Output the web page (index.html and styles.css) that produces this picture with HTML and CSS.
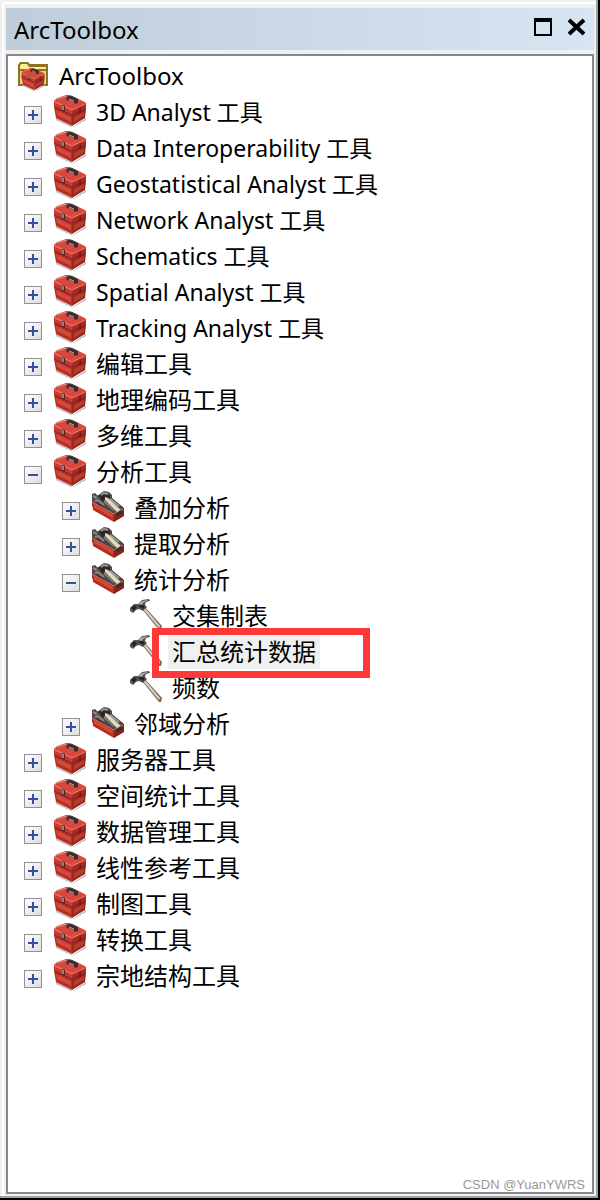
FILE: index.html
```
<!DOCTYPE html>
<html lang="zh-CN">
<head>
    <meta charset="UTF-8">
    <meta name="viewport" content="width=device-width, initial-scale=1.0">
    <title>ArcToolbox</title>
    <link rel="stylesheet" href="styles.css">
</head>
<body>
    <!-- Icons -->
    <svg class="sprite" aria-hidden="true">
        <symbol id="toolbox" viewBox="0 0 32 32">
            <path d="M2 23l17 9 13-9v2l-12 7h-3L2 25z" fill="#bbb"/>
            <path d="M0 6l3-3 9-3 4 0 15 7 1 2-12 6h-3z" fill="#d9483c"/>
            <path d="M0 6l18 9v5L0 12z" fill="#c8382e"/>
            <path d="M32 8v6l-14 6v-5z" fill="#ad2a22"/>
            <path d="M0 12l18 8v11L2 23z" fill="#b92c23"/>
            <path d="M32 14l-14 6v11l13-8z" fill="#982720"/>
            <path d="M2 15l15 7v5L3 20z" fill="#d14a3e"/>
            <path d="M20 22l10-5v4l-10 6z" fill="#b83b30"/>
            <path d="M0 12l18 8 14-6" fill="none" stroke="#77201a"/>
            <path d="M1 7l17 8 13-6" fill="none" stroke="#ea8578"/>
            <path d="M3 4l9-3" fill="none" stroke="#ed9689"/>
            <path d="M12 4l2-3 4 0 6 3v4l-3 1-2-3-4-2-1 2z" fill="#333"/>
            <path d="M15 4l5 2" stroke="#a59a94"/>
            <path d="M8 10l3 1v6l-3-1z" fill="#4c2926"/>
            <path d="M9 11v4" stroke="#ddd"/>
            <path d="M26 12v6" stroke="#5b1512" stroke-width="1"/>
        </symbol>
        <symbol id="toolset" viewBox="0 0 32 32">
            <path d="M0 9l3-3 7-4 22 15v5l-9 5L0 15z" fill="#39332f"/>
            <path d="M0 3l3-1 3 3 3-3 3-2 5 1 3 3 0 3 11 9 0 3-8 6L8 13 0 11z" fill="#4b4846"/>
            <path d="M7 5l4-3 4 0 3 3-1 3 6 7-3 3-10-8z" fill="#292827"/>
            <path d="M9 4l3-2 4 1M18 8l9 7" fill="none" stroke="#999" stroke-width="2"/>
            <path d="M1 5l4 2M3 10l3-1 6 5M12 10l10 9" fill="none" stroke="#8d8985" stroke-width="2"/>
            <path d="M13 6l3 1 14 13-1 3-3-1-13-13z" fill="#e3d8c3"/>
            <path d="M12 9l14 14" fill="none" stroke="#756656"/>
            <path d="M0 11l22 12v8L1 19z" fill="#b92c22"/>
            <path d="M2 13l19 11v3L2 16z" fill="#d5483a"/>
            <path d="M22 24l10-6v7l-10 6z" fill="#8b211b"/>
            <path d="M0 11l22 12 9-5" fill="none" stroke="#df7569"/>
            <path d="M23 23l6-4 2 3-6 3z" fill="#38302b"/>
        </symbol>
        <symbol id="hammer" viewBox="0 0 32 32">
            <path d="M12 10l3-2 17 19-1 4h-2z" fill="#776b60"/>
            <path d="M13 10l2-1 15 18-1 2z" fill="#ddd0bc"/>
            <path d="M0 9l4-4 4 0 4-4 7-1 1 2-4 1-1 3 2 2-4 4-4-2-3 1-3 3-3-2z" fill="#555"/>
            <path d="M1 9l3-3 3 2-3 4zM8 7l4-2 3 3-2 2z" fill="#252525"/>
            <path d="M8 5l4-3 6-1-5 3-1 2z" fill="#aaa"/>
        </symbol>
        <symbol id="root-folder" viewBox="0 0 32 32">
            <path d="M1 5l2-3h8l2 2h18v22H1z" fill="#8d7425"/>
            <path d="M3 6l1-2h6l2 3h17v2H3z" fill="#fff08d"/>
            <path d="M3 11h26v13H3z" fill="#e6d47e"/>
            <use href="#toolbox" x="4" y="8" width="24" height="23"/>
        </symbol>
    </svg>

    <div class="window">
        <header class="titlebar">
            <h1 class="title">ArcToolbox</h1>
            <button class="window-btn" aria-label="最大化"><svg width="18" height="18"><path d="M1 2h16v15H1z" fill="none" stroke="#000" stroke-width="2"/><path d="M0 2h18" stroke="#000" stroke-width="4"/></svg></button>
            <button class="window-btn" aria-label="关闭"><svg width="18" height="18"><path d="M1 2l15 14M16 2L1 16" stroke="#000" stroke-width="4"/></svg></button>
        </header>

        <main class="panel">
            <div class="row root"><svg class="icon"><use href="#root-folder"/></svg><span class="label">ArcToolbox</span></div>
            <ul class="tree">
                <li><div class="row"><button class="toggle" aria-label="展开"></button><svg class="icon"><use href="#toolbox"/></svg><span class="label latin">3D Analyst 工具</span></div></li>
                <li><div class="row"><button class="toggle" aria-label="展开"></button><svg class="icon"><use href="#toolbox"/></svg><span class="label latin">Data Interoperability 工具</span></div></li>
                <li><div class="row"><button class="toggle" aria-label="展开"></button><svg class="icon"><use href="#toolbox"/></svg><span class="label latin">Geostatistical Analyst 工具</span></div></li>
                <li><div class="row"><button class="toggle" aria-label="展开"></button><svg class="icon"><use href="#toolbox"/></svg><span class="label latin">Network Analyst 工具</span></div></li>
                <li><div class="row"><button class="toggle" aria-label="展开"></button><svg class="icon"><use href="#toolbox"/></svg><span class="label latin">Schematics 工具</span></div></li>
                <li><div class="row"><button class="toggle" aria-label="展开"></button><svg class="icon"><use href="#toolbox"/></svg><span class="label latin">Spatial Analyst 工具</span></div></li>
                <li><div class="row"><button class="toggle" aria-label="展开"></button><svg class="icon"><use href="#toolbox"/></svg><span class="label latin">Tracking Analyst 工具</span></div></li>
                <li><div class="row"><button class="toggle" aria-label="展开"></button><svg class="icon"><use href="#toolbox"/></svg><span class="label">编辑工具</span></div></li>
                <li><div class="row"><button class="toggle" aria-label="展开"></button><svg class="icon"><use href="#toolbox"/></svg><span class="label">地理编码工具</span></div></li>
                <li><div class="row"><button class="toggle" aria-label="展开"></button><svg class="icon"><use href="#toolbox"/></svg><span class="label">多维工具</span></div></li>
                <li>
                    <div class="row"><button class="toggle open" aria-label="折叠"></button><svg class="icon"><use href="#toolbox"/></svg><span class="label">分析工具</span></div>
                    <ul class="branch">
                        <li><div class="row"><button class="toggle" aria-label="展开"></button><svg class="icon"><use href="#toolset"/></svg><span class="label">叠加分析</span></div></li>
                        <li><div class="row"><button class="toggle" aria-label="展开"></button><svg class="icon"><use href="#toolset"/></svg><span class="label">提取分析</span></div></li>
                        <li>
                            <div class="row"><button class="toggle open" aria-label="折叠"></button><svg class="icon"><use href="#toolset"/></svg><span class="label">统计分析</span></div>
                            <ul class="branch tools">
                                <li><div class="row"><svg class="icon"><use href="#hammer"/></svg><span class="label">交集制表</span></div></li>
                                <li><div class="row marked"><svg class="icon"><use href="#hammer"/></svg><span class="label selected">汇总统计数据</span></div></li>
                                <li><div class="row"><svg class="icon"><use href="#hammer"/></svg><span class="label">频数</span></div></li>
                            </ul>
                        </li>
                        <li><div class="row"><button class="toggle" aria-label="展开"></button><svg class="icon"><use href="#toolset"/></svg><span class="label">邻域分析</span></div></li>
                    </ul>
                </li>
                <li><div class="row"><button class="toggle" aria-label="展开"></button><svg class="icon"><use href="#toolbox"/></svg><span class="label">服务器工具</span></div></li>
                <li><div class="row"><button class="toggle" aria-label="展开"></button><svg class="icon"><use href="#toolbox"/></svg><span class="label">空间统计工具</span></div></li>
                <li><div class="row"><button class="toggle" aria-label="展开"></button><svg class="icon"><use href="#toolbox"/></svg><span class="label">数据管理工具</span></div></li>
                <li><div class="row"><button class="toggle" aria-label="展开"></button><svg class="icon"><use href="#toolbox"/></svg><span class="label">线性参考工具</span></div></li>
                <li><div class="row"><button class="toggle" aria-label="展开"></button><svg class="icon"><use href="#toolbox"/></svg><span class="label">制图工具</span></div></li>
                <li><div class="row"><button class="toggle" aria-label="展开"></button><svg class="icon"><use href="#toolbox"/></svg><span class="label">转换工具</span></div></li>
                <li><div class="row"><button class="toggle" aria-label="展开"></button><svg class="icon"><use href="#toolbox"/></svg><span class="label">宗地结构工具</span></div></li>
            </ul>
            <footer class="credit">CSDN @YuanYWRS</footer>
        </main>
    </div>
</body>
</html>
```
FILE: styles.css
```
* {
    box-sizing: border-box;
}

body {
    margin: 0;
    background-color: #f0f0f0;
    color: #000;
    font-family: "Noto Sans", "Noto Sans CJK SC", sans-serif;
    font-size: 24px;
}

.sprite {
    position: absolute;
    width: 0;
    height: 0;
}

.window {
    display: flex;
    flex-direction: column;
    gap: 4px;
    min-height: 100vh;
    padding: 8px 4px 4px 6px;
    background-color: #f0f0f0;
    border-right: 2px solid #000;
    border-bottom: 2px solid #000;
    box-shadow: inset -2px -2px #a0a0a0, inset 2px 2px #f0f0f0, inset 4px 4px #fff;
}

.titlebar {
    display: flex;
    align-items: center;
    gap: 16px;
    height: 42px;
    padding: 0 8px;
    background: linear-gradient(to right, #bfcddb, #d7e4f2);
}

.title {
    flex: 1;
    margin: 0;
    font-size: 24px;
    font-weight: normal;
}

.window-btn {
    width: 18px;
    height: 18px;
    margin-bottom: 4px;
    padding: 0;
    border: none;
    background: none;
}

.window-btn svg {
    display: block;
}

.panel {
    display: flex;
    flex-direction: column;
    flex: 1;
    padding-top: 2px;
    border: 2px solid #828790;
    background-color: #fff;
}

.tree,
.branch {
    margin: 0;
    padding: 0;
    list-style: none;
}

.tree {
    padding-left: 16px;
}

.branch {
    padding-left: 38px;
}

.tools {
    padding-left: 68px;
}

.row {
    display: flex;
    align-items: center;
    height: 36px;
}

.root {
    padding-left: 9px;
}

.icon {
    flex: none;
    width: 32px;
    height: 32px;
    margin-bottom: 2px;
}

.root .icon {
    margin-bottom: 0;
}

.label {
    padding: 0 4px;
    margin-left: 6px;
    line-height: 34px;
    white-space: nowrap;
}

.latin {
    font-size: 23px;
}

.toggle {
    flex: none;
    width: 18px;
    height: 18px;
    margin: 6px 12px 0 0;
    padding: 0;
    border: 1px solid #919191;
    background: linear-gradient(#3050a0, #3050a0) center / 10px 2px no-repeat,
        linear-gradient(#3050a0, #3050a0) center / 2px 10px no-repeat,
        linear-gradient(135deg, #fff, #ddd);
}

.toggle.open {
    background: linear-gradient(#3050a0, #3050a0) center / 10px 2px no-repeat,
        linear-gradient(135deg, #fff, #ddd);
}

.selected {
    background-color: #f0f0f0;
}

/* red frame round the tool to run */
.marked {
    position: relative;
}

.marked::after {
    content: "";
    position: absolute;
    top: -6px;
    left: 22px;
    box-sizing: border-box;
    width: 218px;
    height: 50px;
    border: 7px solid #fc3838;
}

.credit {
    margin-top: auto;
    padding-right: 7px;
    color: #999;
    font-family: "Liberation Sans", sans-serif;
    font-size: 13px;
    line-height: 14px;
    text-align: right;
}
```
